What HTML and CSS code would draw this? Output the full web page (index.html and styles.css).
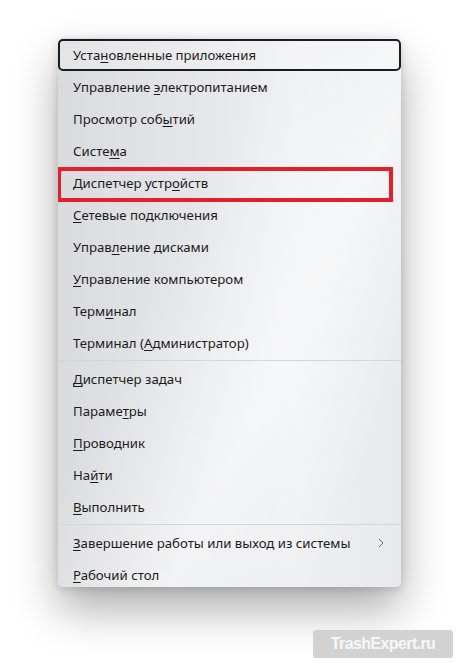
FILE: index.html
```html
<!DOCTYPE html>
<html lang="ru">
<head>
<meta charset="utf-8">
<title>Win+X</title>
<link rel="stylesheet" href="styles.css">
</head>
<body>
<div class="page">
  <div class="menu">
    <div class="item focused"><span>Уста<u>н</u>овленные приложения</span></div>
    <div class="item"><span>Управление <u>э</u>лектропитанием</span></div>
    <div class="item"><span>Просмотр соб<u>ы</u>тий</span></div>
    <div class="item"><span>Систе<u>м</u>а</span></div>
    <div class="item marked"><span>Диспетчер устр<u>о</u>йств</span></div>
    <div class="item"><span><u>С</u>етевые подключения</span></div>
    <div class="item"><span>Управ<u>л</u>ение дисками</span></div>
    <div class="item"><span><u>У</u>правление компьютером</span></div>
    <div class="item"><span>Терм<u>и</u>нал</span></div>
    <div class="item"><span>Терминал (<u>А</u>дминистратор)</span></div>
    <div class="sep"></div>
    <div class="item"><span><u>Д</u>испетчер задач</span></div>
    <div class="item"><span>Параме<u>т</u>ры</span></div>
    <div class="item"><span><u>П</u>роводник</span></div>
    <div class="item"><span>На<u>й</u>ти</span></div>
    <div class="item"><span><u>В</u>ыполнить</span></div>
    <div class="sep"></div>
    <div class="item sub"><span><u>З</u>авершение работы или выход из системы</span>
      <svg class="chev" width="6" height="10" viewBox="0 0 6 10"><path d="M1 1 L5 5 L1 9" fill="none" stroke="#6a6a6a" stroke-width="1"/></svg>
    </div>
    <div class="item last"><span><u>Р</u>абочий стол</span></div>
  </div>
  <div class="wm-row"><div class="wm">TrashExpert.ru</div></div>
</div>
</body>
</html>
```

FILE: styles.css
```css
html, body {
  margin: 0;
  padding: 0;
  background: #ffffff;
}
.page {
  padding: 38px 0 0 58px;
  width: 401px;
  font-family: "Noto Sans", "Open Sans", sans-serif;
}
.menu {
  width: 343px;
  padding-top: 1px;
  border-radius: 5px;
  background:
    linear-gradient(115deg, rgba(255,255,255,0) 35%, rgba(255,255,255,0.55) 62%, rgba(255,255,255,0) 85%),
    linear-gradient(90deg, #dadbde 0%, #e5e6e9 40%, #eeeff1 70%, #e8e9eb 100%);
  box-shadow: 0 22px 45px rgba(0,0,0,0.33), 0 2px 8px rgba(0,0,0,0.14);
  overflow: hidden;
}
.item {
  position: relative;
  height: 32px;
  box-sizing: border-box;
  display: flex;
  align-items: center;
  justify-content: space-between;
  padding: 0 17px 0 15px;
  font-size: 13.2px;
  color: #1b1b1b;
  white-space: nowrap;
}
.item u {
  text-decoration-thickness: 1px;
  text-underline-offset: 2px;
}
.focused {
  border: 2px solid #1c1c1c;
  border-radius: 5px;
  padding-left: 13px;
  background: rgba(255,255,255,0.25);
}
.marked::after {
  content: "";
  position: absolute;
  left: -1px;
  top: 0;
  width: 336px;
  height: 35px;
  box-sizing: border-box;
  border: 4px solid #e41f2b;
}
.last {
  height: 28px;
  padding-top: 3px;
}
.sep {
  height: 1px;
  margin: 1px 0 2px;
  background: #d4d5d8;
}
.chev {
  display: block;
  margin-top: -1px;
}
.wm-row {
  display: flex;
  justify-content: flex-end;
  margin-top: 43px;
  width: 395px;
}
.wm {
  width: 140px;
  height: 28px;
  box-sizing: border-box;
  border-radius: 3px;
  background: #d2d2d2;
  color: #f7f7f7;
  font-family: "Liberation Sans", Arial, sans-serif;
  font-weight: bold;
  font-size: 16px;
  letter-spacing: -0.6px;
  display: flex;
  align-items: center;
  justify-content: center;
}
```
